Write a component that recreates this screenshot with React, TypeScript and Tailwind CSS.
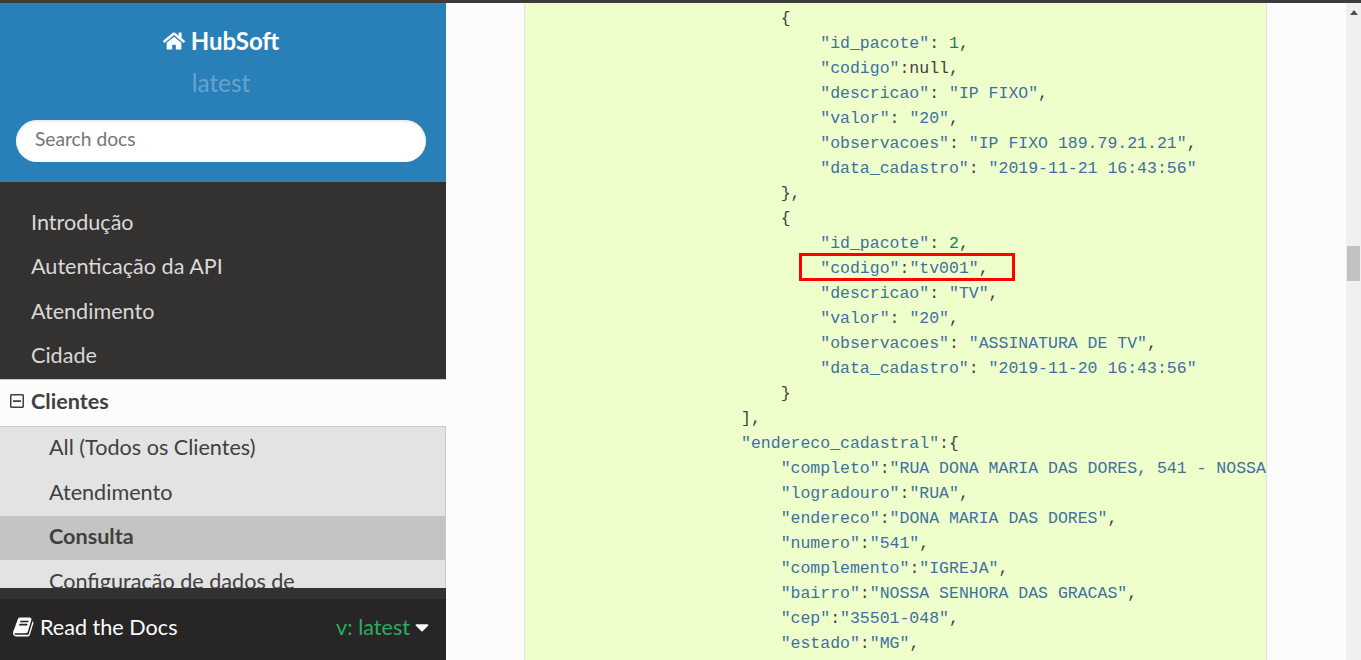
import { FaCaretDown, FaHome, FaRegMinusSquare } from 'react-icons/fa'

type Tok = [string, 's' | 'n' | 'p']

const lines: { indent: number; toks: Tok[] }[] = [
  { indent: 24, toks: [['{', 'p']] },
  { indent: 28, toks: [['"id_pacote"', 's'], [': ', 'p'], ['1', 'n'], [',', 'p']] },
  { indent: 28, toks: [['"codigo"', 's'], [':null,', 'p']] },
  { indent: 28, toks: [['"descricao"', 's'], [': ', 'p'], ['"IP FIXO"', 's'], [',', 'p']] },
  { indent: 28, toks: [['"valor"', 's'], [': ', 'p'], ['"20"', 's'], [',', 'p']] },
  { indent: 28, toks: [['"observacoes"', 's'], [': ', 'p'], ['"IP FIXO 189.79.21.21"', 's'], [',', 'p']] },
  { indent: 28, toks: [['"data_cadastro"', 's'], [': ', 'p'], ['"2019-11-21 16:43:56"', 's']] },
  { indent: 24, toks: [['},', 'p']] },
  { indent: 24, toks: [['{', 'p']] },
  { indent: 28, toks: [['"id_pacote"', 's'], [': ', 'p'], ['2', 'n'], [',', 'p']] },
  { indent: 28, toks: [['"codigo"', 's'], [':', 'p'], ['"tv001"', 's'], [',', 'p']] },
  { indent: 28, toks: [['"descricao"', 's'], [': ', 'p'], ['"TV"', 's'], [',', 'p']] },
  { indent: 28, toks: [['"valor"', 's'], [': ', 'p'], ['"20"', 's'], [',', 'p']] },
  { indent: 28, toks: [['"observacoes"', 's'], [': ', 'p'], ['"ASSINATURA DE TV"', 's'], [',', 'p']] },
  { indent: 28, toks: [['"data_cadastro"', 's'], [': ', 'p'], ['"2019-11-20 16:43:56"', 's']] },
  { indent: 24, toks: [['}', 'p']] },
  { indent: 20, toks: [['],', 'p']] },
  { indent: 20, toks: [['"endereco_cadastral"', 's'], [':{', 'p']] },
  { indent: 24, toks: [['"completo"', 's'], [':', 'p'], ['"RUA DONA MARIA DAS DORES, 541 - NOSSA SENHORA DAS GRACAS"', 's'], [',', 'p']] },
  { indent: 24, toks: [['"logradouro"', 's'], [':', 'p'], ['"RUA"', 's'], [',', 'p']] },
  { indent: 24, toks: [['"endereco"', 's'], [':', 'p'], ['"DONA MARIA DAS DORES"', 's'], [',', 'p']] },
  { indent: 24, toks: [['"numero"', 's'], [':', 'p'], ['"541"', 's'], [',', 'p']] },
  { indent: 24, toks: [['"complemento"', 's'], [':', 'p'], ['"IGREJA"', 's'], [',', 'p']] },
  { indent: 24, toks: [['"bairro"', 's'], [':', 'p'], ['"NOSSA SENHORA DAS GRACAS"', 's'], [',', 'p']] },
  { indent: 24, toks: [['"cep"', 's'], [':', 'p'], ['"35501-048"', 's'], [',', 'p']] },
  { indent: 24, toks: [['"estado"', 's'], [':', 'p'], ['"MG"', 's'], [',', 'p']] },
]

const navItems = ['Introdução', 'Autenticação da API', 'Atendimento', 'Cidade']

function tokClass(kind: Tok[1]) {
  if (kind === 's') return 'text-[#4070a0]'
  if (kind === 'n') return 'text-[#208050]'
  return 'text-[#404040]'
}

function BookIcon() {
  return (
    <svg viewBox="0 0 1792 1792" className="w-[22px] h-[22px]" fill="currentColor">
      <path d="M1639 478q40 57 18 129l-275 906q-19 64-76.5 107.5t-122.5 43.5h-923q-77 0-148.5-53.5t-99.5-131.5q-24-67-2-127 0-4 3-27t4-37q1-8-3-21.5t-3-19.5q2-11 8-21t16.5-23.5 16.5-23.5q23-38 45-91.5t30-91.5q3-10 .5-30t-.5-28q3-11 17-28t17-23q21-36 42-92t25-90q1-9-2.5-32t.5-28q4-13 22-30.5t22-22.5q19-26 42.5-84.5t27.5-96.5q1-8-3-25.5t-2-26.5q2-8 9-18t18-23 17-21q8-12 16.5-30.5t15-35 16-36 19.5-32 26.5-23.5 36-11.5 47.5 5.5l-1 3q38-9 51-9h761q74 0 114 56t18 130l-274 906q-36 119-71.5 153.5t-128.5 34.5h-869q-27 0-38 15-11 16-1 43 24 70 144 70h923q29 0 56-15.5t35-41.5l300-987q7-22 5-57 38 15 59 43zm-1064 2q-4 13 2 22.5t20 9.5h608q13 0 25.5-9.5t16.5-22.5l21-64q4-13-2-22.5t-20-9.5h-608q-13 0-25.5 9.5t-16.5 22.5zm-83 256q-4 13 2 22.5t20 9.5h608q13 0 25.5-9.5t16.5-22.5l21-64q4-13-2-22.5t-20-9.5h-608q-13 0-25.5 9.5t-16.5 22.5z" />
    </svg>
  )
}

function Sidebar() {
  return (
    <aside className="w-[446px] h-full flex flex-col shrink-0 font-['Lato',sans-serif] bg-[#343131]">
      <div className="h-[179px] shrink-0 bg-[#2980b9] flex flex-col items-center pr-[4px]">
        <div className="mt-[21px] h-[34px] flex items-center gap-[6px] text-white font-bold text-[24px]">
          <FaHome className="w-[22px] h-[22px]" />
          HubSoft
        </div>
        <div className="mt-[7px] h-[36px] leading-[36px] text-[24.4px] text-white/30">latest</div>
        <div className="mt-[19px] w-[410px] h-[42px] rounded-full bg-white shadow-[inset_0_1px_3px_#ddd] pl-[19px] pb-[3px] flex items-center text-[19.2px] text-[#757575]">
          Search docs
        </div>
      </div>

      <nav className="flex-1 min-h-0 overflow-hidden text-[21.6px]">
        <ul className="pt-[18.2px] text-[#d9d9d9]">
          {navItems.map(item => (
            <li key={item} className="h-[44.3px] leading-[44.3px] pl-[31px]">{item}</li>
          ))}
        </ul>
        <div className="h-[48px] mt-[1.6px] pb-[3px] bg-[#fcfcfc] border-t border-b border-[#c9c9c9] flex items-center text-[#404040] font-bold">
          <FaRegMinusSquare className="w-[16px] h-[16px] ml-[9px] mr-[6px]" />
          Clientes
        </div>
        <ul className="text-[#404040] bg-[#e3e3e3] border-r border-[#c9c9c9]">
          <li className="h-[45px] leading-[41px] pl-[49px]">All (Todos os Clientes)</li>
          <li className="h-[44px] leading-[41px] pl-[49px]">Atendimento</li>
          <li className="h-[44px] leading-[40px] pl-[49px] bg-[#c4c4c4] font-bold">Consulta</li>
          <li className="h-[44px] leading-[43px] pl-[49px] whitespace-nowrap">Configuração de dados de</li>
        </ul>
      </nav>

      <div className="h-[72px] shrink-0 bg-[#343131] pt-[11px]">
        <div className="h-[61px] bg-[#272525] flex items-center justify-between pl-[13px] pr-[17px] pb-[5px] text-[21.6px]">
          <span className="flex items-center gap-[5px] text-[#fcfcfc]">
            <BookIcon />
            Read the Docs
          </span>
          <span className="flex items-center gap-[5px] text-[#27ae60]">
            v: latest
            <FaCaretDown className="w-[14px] h-[22px] text-[#fcfcfc]" />
          </span>
        </div>
      </div>
    </aside>
  )
}

function CodeBlock() {
  return (
    <div className="relative w-[743px] h-full overflow-hidden bg-[#eeffcc] border-x border-[#e1e4e5]">
      <pre className="pt-[2.5px] pl-[18px] font-['Liberation_Mono',monospace] text-[16.5px] leading-[25px]">
        {lines.map((line, i) => (
          <div key={i} className="h-[25px] whitespace-pre">
            {' '.repeat(line.indent)}
            {line.toks.map(([text, kind], j) => (
              <span key={j} className={tokClass(kind)}>{text}</span>
            ))}
          </div>
        ))}
      </pre>
      {/* marcacao vermelha em cima do codigo */}
      <div className="absolute left-[274px] top-[250px] w-[216px] h-[28px] border-[3px] border-[#ff0000]" />
    </div>
  )
}

export default function App() {
  return (
    <div className="w-[1361px] h-[660px] flex flex-col overflow-hidden bg-[#fcfcfc]">
      <div className="h-[3px] shrink-0 bg-[#3c3c3c]" />
      <div className="flex-1 min-h-0 flex">
        <Sidebar />
        <main className="flex-1 min-w-0 pl-[78px]">
          <CodeBlock />
        </main>
        <div className="w-[15px] shrink-0 bg-[#f0f0f0] flex flex-col items-center">
          <div className="mt-[7px] w-0 h-0 border-x-[4px] border-x-transparent border-b-[5px] border-b-[#505050]" />
          <div className="mt-[231px] w-[13px] h-[35px] bg-[#c1c1c1]" />
        </div>
      </div>
    </div>
  )
}
